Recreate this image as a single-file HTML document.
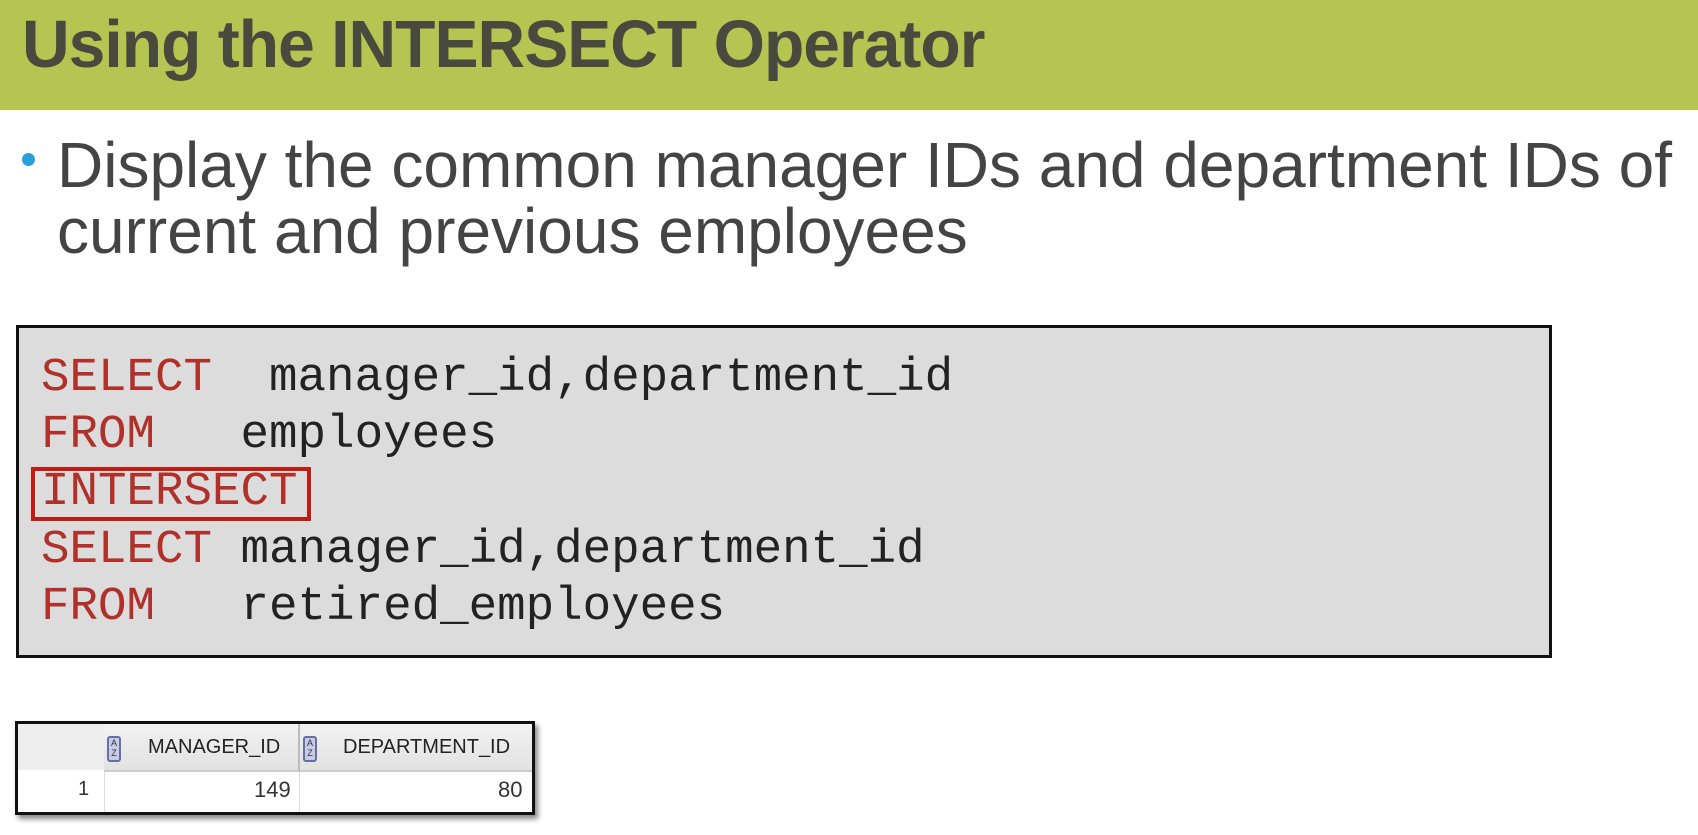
<!DOCTYPE html>
<html><head><meta charset="utf-8"><style>
body{margin:0;width:1698px;height:835px;background:#fff;position:relative;overflow:hidden;font-family:"Liberation Sans",Arial,sans-serif}
.hdr{position:absolute;left:0;top:0;width:1698px;height:110px;background:#b5c552}
.title{position:absolute;left:22px;top:6px;font-size:67px;font-weight:bold;color:#474a3c;letter-spacing:-1px;white-space:nowrap;transform:scaleX(0.985);transform-origin:left}
.bul{position:absolute;left:22px;top:153px;width:13px;height:13px;border-radius:50%;background:#2a9fd8}
.txt{position:absolute;left:57px;top:132px;font-size:64px;line-height:66px;color:#444;white-space:nowrap}
.code{position:absolute;left:16px;top:325px;width:1530px;height:327px;border:3px solid #111;background:#dcdcdc}
.ln{position:absolute;left:22px;font-family:"Liberation Mono",monospace;font-size:47.5px;color:#222;white-space:pre;line-height:50px}
.k{color:#b0302a}
.box{position:absolute;left:12px;top:139px;width:272px;height:46px;border:4px solid #c01c14}
.tbl{position:absolute;left:15px;top:721px;width:514px;height:88px;border:3px solid #111;background:#fff;box-shadow:3px 4px 5px #888;font-size:20px;color:#333}
.th{position:absolute;top:0;height:46px;background:linear-gradient(#f2f2f2,#e2e2e2);border-bottom:2px solid #ccc}
.c{position:absolute;white-space:nowrap}
.ic{position:absolute;top:12px;width:10px;height:22px;border:2px solid #6670a0;border-radius:3px;background:#c8cce6;font-size:9px;line-height:10px;text-align:center;color:#334}
</style></head><body>
<div class="hdr"></div>
<div class="title">Using the INTERSECT Operator</div>
<div class="bul"></div>
<div class="txt">Display the common manager IDs and department IDs of<br>current and previous employees</div>
<div class="code">
<div class="ln" style="top:25px"><span class="k">SELECT</span>  manager_id,department_id</div>
<div class="ln" style="top:82px"><span class="k">FROM</span>   employees</div>
<div class="ln" style="top:139px"><span class="k">INTERSECT</span></div>
<div class="box"></div>
<div class="ln" style="top:197px"><span class="k">SELECT</span> manager_id,department_id</div>
<div class="ln" style="top:254px"><span class="k">FROM</span>   retired_employees</div>
</div>
<div class="tbl">
<div class="th" style="left:0;width:86px;background:#eee;border-bottom:none;height:46px"></div>
<div class="th" style="left:86px;width:194px;border-right:2px solid #bbb"></div>
<div class="th" style="left:282px;width:232px"></div>
<div class="ic" style="left:89px">A<br>Z</div>
<div class="ic" style="left:285px">A<br>Z</div>
<div class="c" style="left:130px;top:12px;color:#222">MANAGER_ID</div>
<div class="c" style="left:325px;top:12px;color:#222">DEPARTMENT_ID</div>
<div class="c" style="left:60px;top:54px">1</div>
<div class="c" style="left:236px;top:53px;font-size:22px">149</div>
<div class="c" style="left:480px;top:53px;font-size:22px">80</div>
<div style="position:absolute;left:86px;top:48px;width:1px;height:40px;background:#ddd"></div>
<div style="position:absolute;left:281px;top:48px;width:1px;height:40px;background:#ddd"></div>
</div>
</body></html>
